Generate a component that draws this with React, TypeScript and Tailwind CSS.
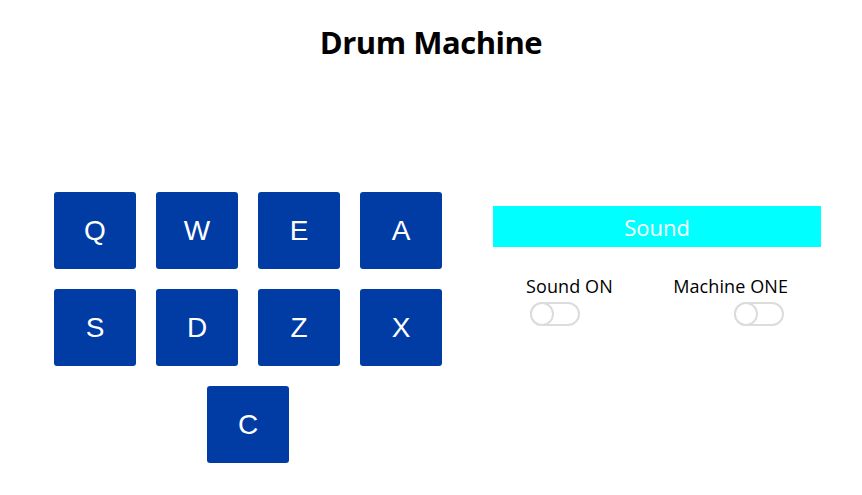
const pads = ['Q', 'W', 'E', 'A', 'S', 'D', 'Z', 'X'];

function Pad({ letter }: { letter: string }) {
  return (
    <button
      type="button"
      className="w-[82px] h-[77px] rounded-[3px] bg-[#003ca3] text-white text-[28px] flex items-center justify-center font-['Liberation_Sans',Arial,sans-serif]"
    >
      {letter}
    </button>
  );
}

function Toggle() {
  return (
    <div className="w-[50px] h-[24px] rounded-full border-2 border-[#dcdcdc] bg-white flex items-center">
      <div className="w-[24px] h-[24px] -ml-[2px] rounded-full border-2 border-[#dcdcdc] bg-white" />
    </div>
  );
}

export default function App() {
  return (
    <div className="w-[862px] h-[495px] bg-white font-['Open_Sans','Noto_Sans',sans-serif] text-black">
      <h1 className="pt-[22px] text-center text-[31px] font-bold leading-[40px] tracking-[-0.5px]">Drum Machine</h1>

      <div className="flex items-start mt-[130px] pl-[54px]">
        <div className="flex flex-col items-center gap-[20px] w-[388px]">
          <div className="grid grid-cols-4 gap-[20px]">
            {pads.map((p) => (
              <Pad key={p} letter={p} />
            ))}
          </div>
          <Pad letter="C" />
        </div>

        <div className="ml-[51px] mt-[14px] w-[328px]">
          <div className="h-[41px] pt-[2px] bg-[#00ffff] text-white text-[22px] flex items-center justify-center">Sound</div>
          <div className="flex justify-between mt-[26px] pl-[33px] pr-[33px]">
            <div className="flex flex-col items-start">
              <span className="text-[18px] leading-[26px] tracking-[0.1px]">Sound ON</span>
              <div className="ml-[4px] mt-[3px]">
                <Toggle />
              </div>
            </div>
            <div className="flex flex-col items-end">
              <span className="text-[18px] leading-[26px] tracking-[0.1px]">Machine ONE</span>
              <div className="mr-[4px] mt-[3px]">
                <Toggle />
              </div>
            </div>
          </div>
        </div>
      </div>
    </div>
  );
}
